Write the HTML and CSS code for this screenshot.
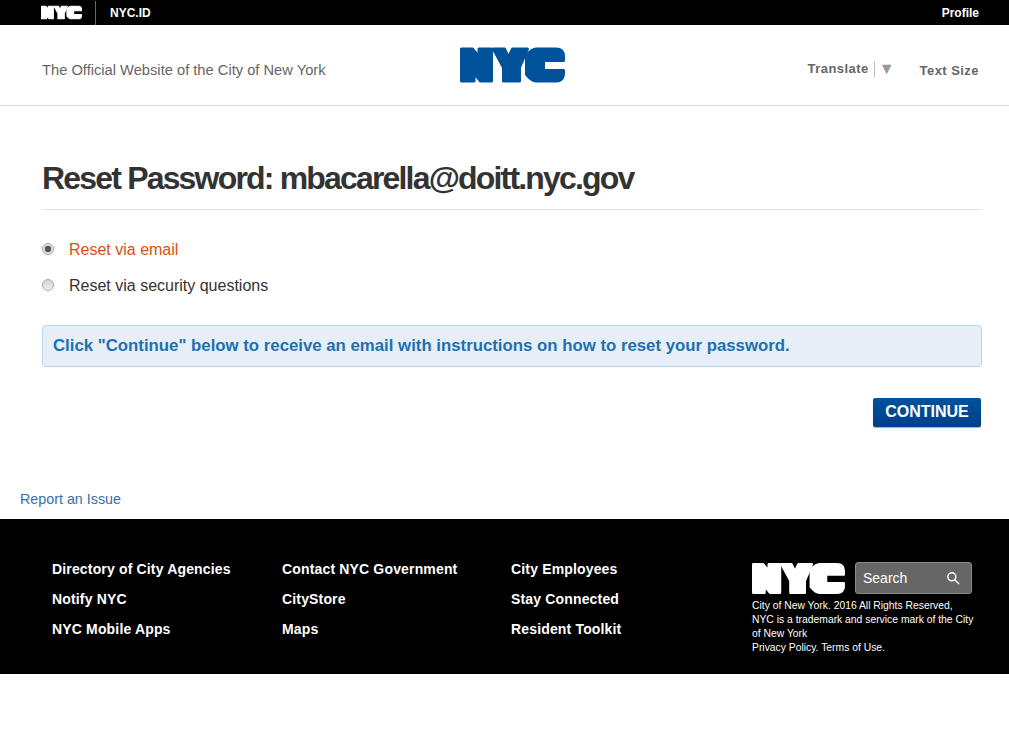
FILE: index.html
```html
<!DOCTYPE html>
<html lang="en">
<head>
  <meta charset="UTF-8">
  <title>Reset Password</title>
  <link rel="stylesheet" href="styles.css">
</head>
<body>
  <svg class="defs" width="0" height="0">
    <symbol id="nyc-logo" viewBox="0 0 105 35">
      <path d="M1.5 1.5H12.5L19 9.5V1.5H31.5V33.5H20.5L14 25.5V33.5H1.5Z"/>
      <path d="M33.5 1.5H44.5L48.5 10L52.5 1.5H67.5L59.5 20V33.5H43.5V20Z"/>
      <path d="M76 1.5H96Q103.5 1.5 103.5 9V13H83.5V23H103.5V26Q103.5 33.5 96 33.5H76Q72 33.5 66.5 27V8Q72 1.5 76 1.5Z"/>
    </symbol>
  </svg>

  <!-- top bar -->
  <div class="topbar">
    <div class="topbar-left">
      <svg class="topbar-logo"><use href="#nyc-logo"/></svg>
      <a class="topbar-link nycid" href="#">NYC.ID</a>
    </div>
    <a class="topbar-link" href="#">Profile</a>
  </div>

  <!-- header -->
  <header class="site-header">
    <div class="tagline">The Official Website of the City of New York</div>
    <svg class="header-logo"><use href="#nyc-logo"/></svg>
    <div class="header-tools">
      <a class="tool translate" href="#">Translate</a>
      <span class="tool-arrow">▼</span>
      <a class="tool text-size" href="#">Text Size</a>
    </div>
  </header>

  <!-- main -->
  <main class="content">
    <h1>Reset Password: mbacarella@doitt.nyc.gov</h1>
    <div class="options">
      <label class="option selected"><span class="radio checked"></span>Reset via email</label>
      <label class="option"><span class="radio"></span>Reset via security questions</label>
    </div>
    <div class="notice">Click "Continue" below to receive an email with instructions on how to reset your password.</div>
    <div class="actions"><button class="btn-continue">CONTINUE</button></div>
  </main>

  <a class="report" href="#">Report an Issue</a>

  <!-- footer -->
  <footer class="site-footer">
    <div class="footer-links">
      <ul>
        <li><a href="#">Directory of City Agencies</a></li>
        <li><a href="#">Notify NYC</a></li>
        <li><a href="#">NYC Mobile Apps</a></li>
      </ul>
      <ul>
        <li><a href="#">Contact NYC Government</a></li>
        <li><a href="#">CityStore</a></li>
        <li><a href="#">Maps</a></li>
      </ul>
      <ul>
        <li><a href="#">City Employees</a></li>
        <li><a href="#">Stay Connected</a></li>
        <li><a href="#">Resident Toolkit</a></li>
      </ul>
    </div>
    <div class="footer-side">
      <div class="footer-brand">
        <svg class="footer-logo"><use href="#nyc-logo"/></svg>
        <div class="search">
          <span>Search</span>
          <svg class="search-icon" viewBox="0 0 14 14"><circle cx="5.8" cy="5.8" r="4"/><path d="M8.8 8.8L13 13"/></svg>
        </div>
      </div>
      <p class="legal">City of New York. 2016 All Rights Reserved,<br>NYC is a trademark and service mark of the City of New York<br>Privacy Policy. Terms of Use.</p>
    </div>
  </footer>
</body>
</html>
```

FILE: styles.css
```css
* { margin:0; padding:0; box-sizing:border-box; }
html, body { background:#fff; color:#333; font-family:"Liberation Sans", Arial, sans-serif; }
a { color:inherit; text-decoration:none; }
.defs { display:block; height:0; }
symbol path { stroke-width:3; stroke-linejoin:round; }

/* top bar */
.topbar { height:25px; background:#000; color:#fff; display:flex; justify-content:space-between; align-items:center; padding:0 30px 0 41px; }
.topbar-left { display:flex; align-items:center; height:100%; }
.topbar-logo { width:41px; height:15px; fill:#fff; stroke:#fff; }
.topbar-link { font-size:12px; font-weight:bold; }
.nycid { height:24px; line-height:24px; margin-left:13px; padding-left:14px; border-left:1px solid #666; }

/* header */
.site-header { height:81px; border-bottom:1px solid #d8d8d8; display:grid; grid-template-columns:1fr 105px 1fr; align-items:center; padding:0 30px 0 42px; }
.tagline { font-size:14.7px; color:#666; padding-top:9px; }
.header-logo { width:105px; height:36px; fill:#00539b; stroke:#00539b; margin:0 0 0 2px; }
.header-tools { display:flex; justify-content:flex-end; align-items:center; color:#666; padding-top:9px; }
.tool { font-size:13px; font-weight:bold; letter-spacing:.45px; }
.translate { padding-right:5px; border-right:1px solid #bbb; line-height:16px; margin-top:-1px; }
.text-size { margin-top:1px; }
.tool-arrow { font-size:16px; line-height:16px; color:#999; margin:-2px 25px 0 4px; }

/* main */
.content { padding:54px 27px 0 42px; }
h1 { font-size:32px; line-height:37px; font-weight:bold; letter-spacing:-1.82px; color:#333; padding-bottom:12px; border-bottom:1px solid #e2e2e2; }
.options { display:flex; flex-direction:column; gap:18px; margin-top:31px; }
.option { display:flex; align-items:center; font-size:16px; line-height:18px; color:#333; }
.option.selected { color:#d9510c; }
.radio { width:12px; height:12px; border-radius:50%; margin:-2px 15px 0 0; border:1px solid #aaa; background:linear-gradient(#d4d4d4,#f0f0f0); }
.radio.checked { background:radial-gradient(circle,#555 0,#555 3px,#ddd 3.5px); }
.notice { margin-top:30px; height:42px; line-height:39px; padding-left:10px; font-size:16.8px; font-weight:bold; color:#1f6fb2; background:#e6eff7; border:1px solid #b9d5ec; border-radius:4px; }
.actions { display:flex; justify-content:flex-end; margin-top:31px; padding-right:1px; }
.btn-continue { width:108px; height:29px; padding-bottom:2px; border:none; border-radius:2px; color:#fff; font:bold 16px "Liberation Sans", Arial, sans-serif; background:linear-gradient(#00539b,#003f8a); box-shadow:0 1px 1px #aaa; }

.report { display:block; margin:64px 0 11px 20px; font-size:14.3px; line-height:17px; color:#3a6ea5; }

/* footer */
.site-footer { height:155px; background:#000; color:#fff; display:flex; padding:35px 30px 0 52px; }
.footer-links { display:grid; grid-template-columns:230px 229px 241px; }
.footer-links ul { list-style:none; }
.footer-links li { font-size:14px; font-weight:bold; line-height:30px; letter-spacing:.16px; }
.footer-side { width:224px; margin-top:8px; }
.footer-brand { display:flex; align-items:center; gap:10px; }
.footer-logo { width:93px; height:31px; fill:#fff; stroke:#fff; }
.search { width:117px; height:32px; display:flex; justify-content:space-between; align-items:center; padding:0 11px 0 7px; background:#666; border:1px solid #888; border-radius:3px; font-size:14px; }
.search-icon { width:14px; height:14px; fill:none; stroke:#fff; stroke-width:1.5; }
.legal { font-size:10.35px; line-height:14px; margin-top:5px; }
```
